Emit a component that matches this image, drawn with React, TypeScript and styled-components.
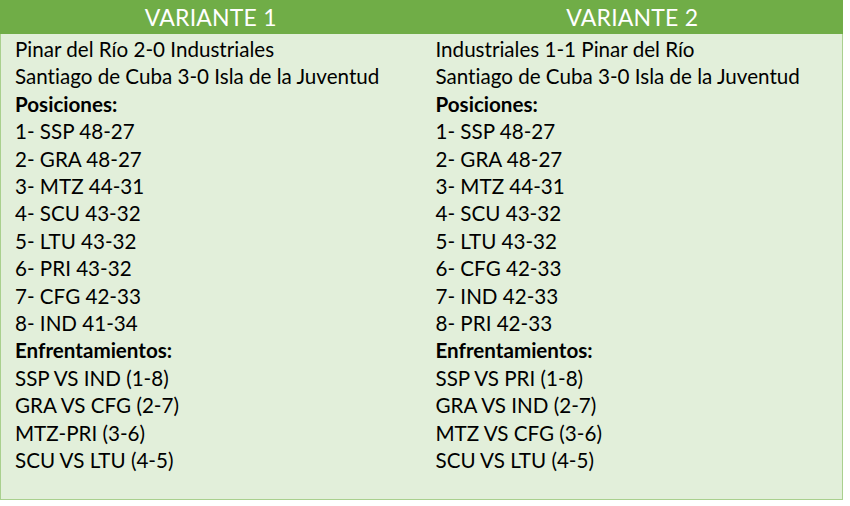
import * as React from "react";
import styled, { createGlobalStyle } from "styled-components";

const GlobalStyle = createGlobalStyle`
  html, body {
    margin: 0;
    padding: 0;
    background: #ffffff;
  }
  body {
    font-family: Lato, "Open Sans", sans-serif;
    font-variant-ligatures: none;
  }
`;

const STable = styled.div`
  width: 843px;
  display: grid;
  grid-template-columns: 1fr 1fr;
  grid-template-rows: 34px 466px;
`;

const SHeader = styled.div`
  background: #70ad47;
  color: #ffffff;
  font-size: 23px;
  line-height: 34px;
  text-align: center;
  letter-spacing: 0.2px;
`;

const SBody = styled.div<{ $last?: boolean }>`
  background: #e2efda;
  border-bottom: 1px solid #a9d08e;
  border-left: ${(p) => (p.$last ? "none" : "1px solid #a9d08e")};
  border-right: ${(p) => (p.$last ? "1px solid #a9d08e" : "none")};
  padding: 2px 0 0 14px;
  display: flex;
  flex-direction: column;
  color: #000000;
  font-size: 20.6px;
  line-height: 27.4px;
`;

const SLine = styled.div<{ $bold?: boolean }>`
  font-weight: ${(p) => (p.$bold ? 700 : 400)};
  white-space: nowrap;
`;

interface IVariant {
  title: string;
  results: string[];
  positions: string[];
  matchups: string[];
}

const variants: IVariant[] = [
  {
    title: "VARIANTE 1",
    results: ["Pinar del Río 2-0 Industriales", "Santiago de Cuba 3-0 Isla de la Juventud"],
    positions: [
      "1- SSP 48-27",
      "2- GRA 48-27",
      "3- MTZ 44-31",
      "4- SCU 43-32",
      "5- LTU 43-32",
      "6- PRI 43-32",
      "7- CFG 42-33",
      "8- IND 41-34",
    ],
    matchups: ["SSP VS IND (1-8)", "GRA VS CFG (2-7)", "MTZ-PRI (3-6)", "SCU VS LTU (4-5)"],
  },
  {
    title: "VARIANTE 2",
    results: ["Industriales 1-1 Pinar del Río", "Santiago de Cuba 3-0 Isla de la Juventud"],
    positions: [
      "1- SSP 48-27",
      "2- GRA 48-27",
      "3- MTZ 44-31",
      "4- SCU 43-32",
      "5- LTU 43-32",
      "6- CFG 42-33",
      "7- IND 42-33",
      "8- PRI 42-33",
    ],
    matchups: ["SSP VS PRI (1-8)", "GRA VS IND (2-7)", "MTZ VS CFG (3-6)", "SCU VS LTU (4-5)"],
  },
];

export default function App() {
  return (
    <>
      <GlobalStyle />
      <STable>
        {variants.map((v) => (
          <SHeader key={v.title}>{v.title}</SHeader>
        ))}
        {variants.map((v, i) => (
          <SBody key={v.title} $last={i === variants.length - 1}>
            {v.results.map((r) => (
              <SLine key={r}>{r}</SLine>
            ))}
            <SLine $bold>Posiciones:</SLine>
            {v.positions.map((p) => (
              <SLine key={p}>{p}</SLine>
            ))}
            <SLine $bold>Enfrentamientos:</SLine>
            {v.matchups.map((m) => (
              <SLine key={m}>{m}</SLine>
            ))}
          </SBody>
        ))}
      </STable>
    </>
  );
}
